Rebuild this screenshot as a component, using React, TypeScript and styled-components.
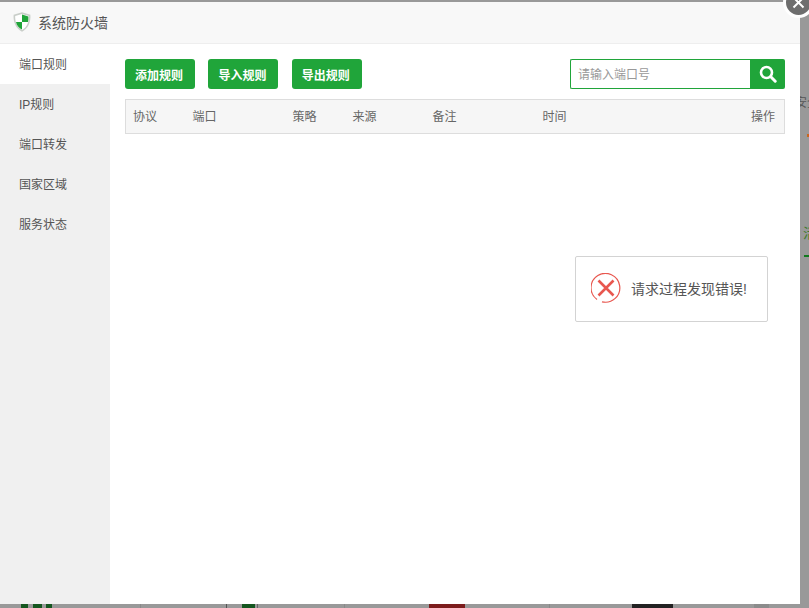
import React from 'react';
import styled, { createGlobalStyle } from 'styled-components';

const GlobalStyle = createGlobalStyle`
  html, body {
    margin: 0;
    padding: 0;
    height: 100%;
    overflow: hidden;
  }
  body {
    font-family: "Liberation Sans", "Noto Sans CJK SC", sans-serif;
    font-size: 12px;
    color: #666;
  }
  * {
    box-sizing: border-box;
  }
`;

const Backdrop = styled.div`
  width: 809px;
  height: 608px;
  padding-top: 2px;
  background: #999;
  overflow: hidden;
  display: grid;
  grid-template-columns: 800px 9px;
  grid-template-rows: 602px 4px;
`;

// the page behind the layer only shows in a thin strip on the right and at the bottom
const RightStrip = styled.div`
  display: flex;
  flex-direction: column;
  align-items: flex-start;
  overflow: hidden;
`;

const StripText = styled.span<{ $mt: number; $ml: number; $size: number; $color: string }>`
  margin: ${p => p.$mt}px 0 0 ${p => p.$ml}px;
  font-size: ${p => p.$size}px;
  line-height: 16px;
  color: ${p => p.$color};
  white-space: nowrap;
`;

const StripMark = styled.div<{ $mt: number; $ml: number; $h: number; $color: string }>`
  flex: none;
  width: 9px;
  height: ${p => p.$h}px;
  margin: ${p => p.$mt}px 0 0 ${p => p.$ml}px;
  background: ${p => p.$color};
`;

const BottomStrip = styled.div`
  grid-column: 1 / 3;
  display: flex;
`;

const BottomPiece = styled.div<{ $w: number; $color?: string }>`
  flex: none;
  width: ${p => p.$w}px;
  background: ${p => p.$color || 'transparent'};
`;

const Layer = styled.div`
  position: relative;
  background: #fff;
  display: flex;
  flex-direction: column;
`;

const LayerTitle = styled.header`
  height: 42px;
  flex: none;
  display: flex;
  align-items: center;
  gap: 7px;
  padding: 0 0 1px 13px;
  background: #f8f8f8;
  border-bottom: 1px solid #eee;
  font-size: 14px;
  color: #555;
`;

const CloseButton = styled.button`
  position: absolute;
  top: -15px;
  left: 783px;
  width: 31px;
  height: 31px;
  padding: 0;
  border: 3px solid #fff;
  border-radius: 50%;
  background: #6e6e6e;
  display: flex;
  align-items: center;
  justify-content: center;
`;

const LayerBody = styled.div`
  flex: 1;
  display: flex;
  min-height: 0;
`;

const SideNav = styled.nav`
  width: 110px;
  flex: none;
  background: #f0f0f0;
`;

const NavItem = styled.div<{ $active?: boolean }>`
  height: 40px;
  line-height: 42px;
  padding-left: 19px;
  font-size: 12px;
  color: #555;
  background: ${p => (p.$active ? '#fff' : 'transparent')};
`;

const Content = styled.main`
  flex: 1;
  padding: 15px 15px 0;
`;

const Toolbar = styled.div`
  display: flex;
  align-items: center;
  height: 30px;
  margin-bottom: 10px;
`;

const GreenButton = styled.button`
  width: 70px;
  height: 30px;
  margin-right: 13.4px;
  padding: 0 2px 0 0;
  border: 0;
  border-radius: 3px;
  background: #20a53a;
  color: #fff;
  font-family: inherit;
  font-size: 12px;
  font-weight: bold;
`;

const SearchBox = styled.div`
  margin-left: auto;
  width: 215px;
  height: 30px;
  display: flex;
`;

const SearchInput = styled.input`
  width: 180px;
  height: 30px;
  padding: 2px 8px 0 7px;
  border: 1px solid #20a53a;
  border-right: 0;
  border-radius: 2px 0 0 2px;
  outline: none;
  font-family: inherit;
  font-size: 12px;
  &::placeholder {
    color: #999;
    opacity: 1;
  }
`;

const SearchButton = styled.button`
  width: 35px;
  height: 30px;
  padding: 0;
  border: 0;
  border-radius: 0 2px 2px 0;
  background: #20a53a;
  display: flex;
  align-items: center;
  justify-content: center;
`;

const Table = styled.table`
  width: 660px;
  border-collapse: collapse;
  table-layout: fixed;
`;

const HeadCell = styled.th<{ $w?: number; $right?: boolean }>`
  width: ${p => (p.$w ? `${p.$w}px` : 'auto')};
  height: 34px;
  padding: 0 8px;
  background: #f6f6f6;
  border-top: 1px solid #ddd;
  border-bottom: 1px solid #ddd;
  font-size: 12px;
  line-height: 14px;
  font-weight: normal;
  color: #666;
  text-align: ${p => (p.$right ? 'right' : 'left')};
  &:first-child {
    border-left: 1px solid #ddd;
    padding-left: 7px;
  }
  &:last-child {
    border-right: 1px solid #ddd;
    padding-right: 9px;
  }
`;

const Toast = styled.div`
  position: absolute;
  top: 254px;
  left: 575px;
  width: 193px;
  height: 66px;
  display: flex;
  align-items: center;
  gap: 10px;
  padding: 0 0 3px 15px;
  background: #fff;
  border: 1px solid #d3d3d3;
  border-radius: 2px;
  font-size: 14px;
  color: #555;
`;

const columns = [
  { label: '协议', w: 59 },
  { label: '端口', w: 100 },
  { label: '策略', w: 60 },
  { label: '来源', w: 80 },
  { label: '备注', w: 110 },
  { label: '时间', w: 150 },
];

const navItems = ['端口规则', 'IP规则', '端口转发', '国家区域', '服务状态'];

// what peeks out under the layer, left to right
const bottomPieces: { w: number; color?: string }[] = [
  { w: 21 },
  { w: 7, color: '#14561f' },
  { w: 5 },
  { w: 9, color: '#14561f' },
  { w: 4 },
  { w: 6, color: '#14561f' },
  { w: 88 },
  { w: 1, color: '#8a8a8a' },
  { w: 85 },
  { w: 1, color: '#555' },
  { w: 15 },
  { w: 13, color: '#14561f' },
  { w: 2 },
  { w: 1, color: '#666' },
  { w: 86 },
  { w: 1, color: '#8a8a8a' },
  { w: 84 },
  { w: 36, color: '#7c1c1c' },
  { w: 84 },
  { w: 1, color: '#8a8a8a' },
  { w: 82 },
  { w: 41, color: '#222' },
  { w: 81 },
  { w: 15, color: '#8c8c8c' },
];

const ShieldIcon = () => (
  <svg width="18" height="20" viewBox="0 0 18 20">
    <path d="M9 .2 L17.4 2.8 C17.8 10 15.6 16.2 9 19.8 C2.4 16.2 .2 10 .6 2.8 Z" fill="#c9cec9" />
    <path d="M9 2 L15.8 4.1 C16 10 14.2 15.2 9 18 C3.8 15.2 2 10 2.2 4.1 Z" fill="#fff" />
    <path d="M9 2.6 L15.4 4.5 C15.5 6.6 15.3 8.4 15 10 L9 10 Z" fill="#20a53a" />
    <path d="M9 10 L3 10 C3.8 13.4 5.7 16 9 17.6 Z" fill="#20a53a" />
  </svg>
);

const SearchIcon = () => (
  <svg width="18" height="18" viewBox="0 0 18 18" fill="none" stroke="#fff">
    <circle cx="7.5" cy="7.5" r="5.5" strokeWidth="2.6" />
    <path d="M11.8 11.8 L16.2 16.2" strokeWidth="3" strokeLinecap="round" />
  </svg>
);

const ErrorIcon = () => (
  <svg width="30" height="30" viewBox="0 0 30 30" fill="none" stroke="#e8574f">
    <path d="M6 26.5 A14.4 14.4 0 1 1 11 28.8" strokeWidth="1.2" />
    <path d="M7.5 7.5 L22.5 22.5 M22.5 7.5 L7.5 22.5" strokeWidth="2.6" />
  </svg>
);

const App: React.FC = () => {
  return (
    <Backdrop>
      <GlobalStyle />
      <Layer>
        <LayerTitle>
          <ShieldIcon />
          系统防火墙
        </LayerTitle>
        <CloseButton aria-label="关闭">
          <svg width="13" height="13" viewBox="0 0 13 13" stroke="#fff" strokeWidth="2">
            <path d="M1.5 1.5 L11.5 11.5 M11.5 1.5 L1.5 11.5" />
          </svg>
        </CloseButton>
        <LayerBody>
          <SideNav>
            {navItems.map((item, i) => (
              <NavItem key={item} $active={i === 0}>{item}</NavItem>
            ))}
          </SideNav>
          <Content>
            <Toolbar>
              <GreenButton>添加规则</GreenButton>
              <GreenButton>导入规则</GreenButton>
              <GreenButton>导出规则</GreenButton>
              <SearchBox>
                <SearchInput placeholder="请输入端口号" />
                <SearchButton aria-label="搜索"><SearchIcon /></SearchButton>
              </SearchBox>
            </Toolbar>
            <Table>
              <thead>
                <tr>
                  {columns.map(col => (
                    <HeadCell key={col.label} $w={col.w}>{col.label}</HeadCell>
                  ))}
                  <HeadCell $right>操作</HeadCell>
                </tr>
              </thead>
            </Table>
          </Content>
        </LayerBody>
        <Toast>
          <ErrorIcon />
          请求过程发现错误!
        </Toast>
      </Layer>
      <RightStrip>
        <StripText $mt={93} $ml={-5} $size={12} $color="#555">安全</StripText>
        <StripMark $mt={23} $ml={7} $h={3} $color="#c8661e" />
        <StripText $mt={88} $ml={3} $size={14} $color="#3d7a2c">活</StripText>
        <StripMark $mt={14} $ml={4} $h={2} $color="#127a1e" />
      </RightStrip>
      <BottomStrip>
        {bottomPieces.map((piece, i) => (
          <BottomPiece key={i} $w={piece.w} $color={piece.color} />
        ))}
      </BottomStrip>
    </Backdrop>
  );
};

export default App;
